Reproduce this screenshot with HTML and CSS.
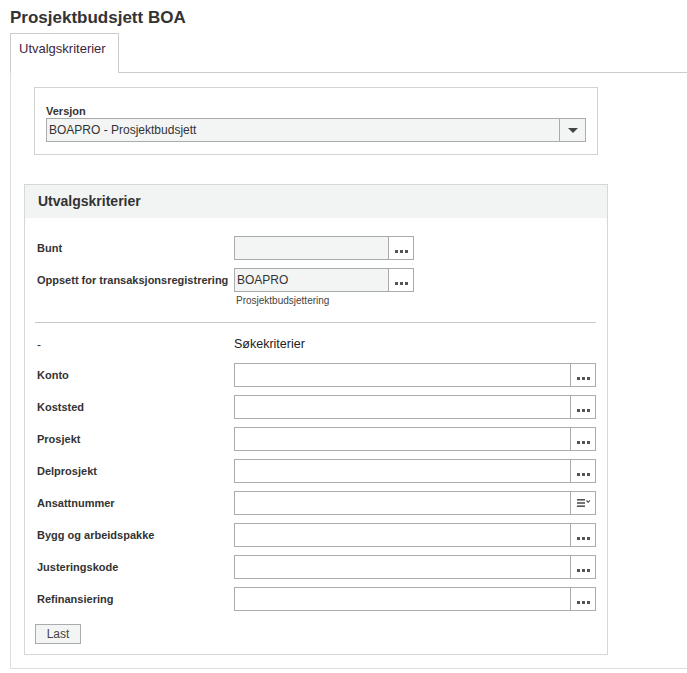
FILE: index.html
```html
<!DOCTYPE html>
<html lang="no">
<head>
<meta charset="utf-8">
<title>Prosjektbudsjett BOA</title>
<link rel="stylesheet" href="styles.css">
</head>
<body>
<h1 class="title">Prosjektbudsjett BOA</h1>
<div class="tabbar">
  <div class="tab">Utvalgskriterier</div>
  <div class="tab-fill"></div>
</div>
<div class="tab-panel">
  <div class="version-box">
    <div class="field-label">Versjon</div>
    <div class="select">
      <span class="select-value">BOAPRO - Prosjektbudsjett</span>
      <span class="select-btn"><span class="caret"></span></span>
    </div>
  </div>

  <div class="panel">
    <div class="panel-head">Utvalgskriterier</div>
    <div class="panel-body">
      <div class="row">
        <div class="label">Bunt</div>
        <div class="lookup short readonly"><span class="lookup-value"></span><span class="lookup-btn"><span class="dots"><i></i><i></i><i></i></span></span></div>
      </div>
      <div class="row row-hint">
        <div class="label">Oppsett for transaksjonsregistrering</div>
        <div class="field-col">
          <div class="lookup short readonly"><span class="lookup-value">BOAPRO</span><span class="lookup-btn"><span class="dots"><i></i><i></i><i></i></span></span></div>
          <div class="hint">Prosjektbudsjettering</div>
        </div>
      </div>
      <div class="separator"></div>
      <div class="row section-row">
        <div class="dash">-</div>
        <div class="section-title">Søkekriterier</div>
      </div>
      <div class="search-rows">
        <div class="row">
          <div class="label">Konto</div>
          <div class="lookup"><span class="lookup-value"></span><span class="lookup-btn"><span class="dots"><i></i><i></i><i></i></span></span></div>
        </div>
        <div class="row">
          <div class="label">Koststed</div>
          <div class="lookup"><span class="lookup-value"></span><span class="lookup-btn"><span class="dots"><i></i><i></i><i></i></span></span></div>
        </div>
        <div class="row">
          <div class="label">Prosjekt</div>
          <div class="lookup"><span class="lookup-value"></span><span class="lookup-btn"><span class="dots"><i></i><i></i><i></i></span></span></div>
        </div>
        <div class="row">
          <div class="label">Delprosjekt</div>
          <div class="lookup"><span class="lookup-value"></span><span class="lookup-btn"><span class="dots"><i></i><i></i><i></i></span></span></div>
        </div>
        <div class="row">
          <div class="label">Ansattnummer</div>
          <div class="lookup"><span class="lookup-value"></span><span class="lookup-btn">
            <svg class="list-icon" width="14" height="10" viewBox="0 0 14 10"><rect x="0" y="1" width="8" height="1.6" fill="#555"/><rect x="0" y="4.2" width="8" height="1.6" fill="#555"/><rect x="0" y="7.4" width="8" height="1.6" fill="#555"/><path d="M9.5 2.5 L11.2 4.2 L12.9 2.5" fill="none" stroke="#555" stroke-width="1.1"/></svg>
          </span></div>
        </div>
        <div class="row">
          <div class="label">Bygg og arbeidspakke</div>
          <div class="lookup"><span class="lookup-value"></span><span class="lookup-btn"><span class="dots"><i></i><i></i><i></i></span></span></div>
        </div>
        <div class="row">
          <div class="label">Justeringskode</div>
          <div class="lookup"><span class="lookup-value"></span><span class="lookup-btn"><span class="dots"><i></i><i></i><i></i></span></span></div>
        </div>
        <div class="row">
          <div class="label">Refinansiering</div>
          <div class="lookup"><span class="lookup-value"></span><span class="lookup-btn"><span class="dots"><i></i><i></i><i></i></span></span></div>
        </div>
      </div>
      <button class="btn">Last</button>
    </div>
  </div>
</div>
</body>
</html>
```
FILE: styles.css
```css
html, body {
  margin: 0;
  padding: 0;
  background: #fff;
}
body {
  font-family: "Liberation Sans", Arial, sans-serif;
  color: #333;
  font-size: 12px;
}
.title {
  margin: 0;
  padding: 8px 0 0 10px;
  font-size: 17px;
  font-weight: bold;
  line-height: 20px;
  color: #333;
  height: 25px;
}
.tabbar {
  display: flex;
  padding-left: 10px;
}
.tab {
  border: 1px solid #ccc;
  border-bottom: none;
  padding: 0 8px;
  height: 40px;
  line-height: 30px;
  font-size: 13px;
  color: #3d1f3d;
  box-sizing: border-box;
  width: 109px;
}
.tab-fill {
  flex: 1;
  border-bottom: 1px solid #ccc;
}
.tab-panel {
  margin-left: 10px;
  border-left: 1px solid #ddd;
  border-bottom: 1px solid #ddd;
  padding: 14px 0 13px 13px;
}
.version-box {
  margin-left: 10px;
  width: 564px;
  box-sizing: border-box;
  border: 1px solid #d3d3d3;
  padding: 17px 11px 12px 11px;
}
.field-label {
  font-weight: bold;
  font-size: 11px;
  line-height: 12px;
  color: #333;
  margin-bottom: 1px;
}
.select {
  display: flex;
  height: 24px;
  box-sizing: border-box;
  border: 1px solid #a8acae;
  background: #f3f5f4;
}
.select-value {
  flex: 1;
  padding-left: 2px;
  line-height: 22px;
  font-size: 12px;
  color: #333;
}
.select-btn {
  width: 25px;
  border-left: 1px solid #a8acae;
  display: flex;
  align-items: center;
  justify-content: center;
}
.caret {
  width: 0;
  height: 0;
  border-left: 5px solid transparent;
  border-right: 5px solid transparent;
  border-top: 5px solid #444;
}
.panel {
  margin-top: 29px;
  width: 584px;
  box-sizing: border-box;
  border: 1px solid #d5d8da;
}
.panel-head {
  background: #f2f3f3;
  height: 33px;
  line-height: 33px;
  padding-left: 13px;
  font-size: 14px;
  font-weight: bold;
  color: #333;
}
.panel-body {
  padding: 18px 11px 10px 12px;
}
.row {
  display: grid;
  grid-template-columns: 197px 1fr;
  align-items: center;
}
.row + .row {
  margin-top: 8px;
}
.row-hint {
  align-items: start;
}
.row-hint .label {
  line-height: 24px;
}
.label {
  font-weight: bold;
  font-size: 11px;
  color: #333;
  white-space: nowrap;
}
.lookup {
  display: flex;
  height: 24px;
  box-sizing: border-box;
  border: 1px solid #a8acae;
  background: #fff;
}
.lookup.short {
  width: 180px;
}
.lookup.readonly {
  background: #f3f5f4;
}
.lookup-value {
  flex: 1;
  padding-left: 2px;
  line-height: 22px;
  font-size: 12px;
  color: #333;
}
.lookup-btn {
  width: 24px;
  border-left: 1px solid #a8acae;
  display: flex;
  align-items: center;
  justify-content: center;
  background: #fff;
}
.dots {
  display: flex;
  gap: 2px;
  margin-top: 6px;
}
.dots i {
  display: block;
  width: 3px;
  height: 3px;
  background: #555;
}
.list-icon {
  margin-left: 1px;
}
.hint {
  font-size: 10px;
  color: #444;
  line-height: 13px;
  margin-top: 2px;
  padding-left: 2px;
}
.separator {
  border-top: 1px solid #c6c9cb;
  margin: 15px 0 0 -2px;
}
.section-row {
  margin-top: 12px;
  height: 16px;
}
.dash {
  font-size: 12px;
  padding-top: 3px;
}
.section-title {
  font-size: 12.5px;
  color: #222;
}
.search-rows {
  margin-top: 12px;
}
.btn {
  margin-top: 13px;
  margin-left: -2px;
  font-family: "Liberation Sans", Arial, sans-serif;
  font-size: 12px;
  color: #444;
  background: #f3f5f5;
  border: 1px solid #a8acae;
  width: 46px;
  height: 20px;
  padding: 0;
}
```
